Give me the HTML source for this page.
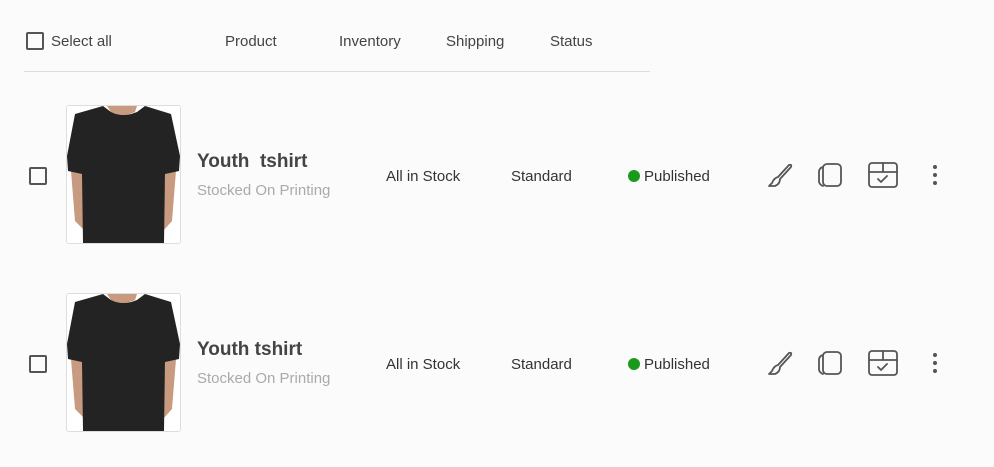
<!DOCTYPE html>
<html><head><style>
body{margin:0;width:994px;height:467px;background:#fbfbfb;font-family:"Liberation Sans",sans-serif;color:#333;position:relative;overflow:hidden}
.a{position:absolute;white-space:nowrap}
.cb{position:absolute;width:14px;height:14px;border:2px solid #555;border-radius:2px}
.h{font-size:15px;color:#444;top:33px}
.img{position:absolute;left:66px;width:113px;height:137px;border:1px solid #ddd;border-radius:3px;background:#fff;overflow:hidden}
.t{font-size:19px;font-weight:bold;color:#444;left:197px}
.s{font-size:15px;color:#aaa;left:197px}
.c{font-size:15px;color:#333}
.dot{display:inline-block;width:12px;height:12px;border-radius:50%;background:#1a9a1a;margin-right:4px;vertical-align:-1px}
</style></head><body>
<div class="cb" style="left:26px;top:32px"></div>
<div class="a h" style="left:51px">Select all</div>
<div class="a h" style="left:225px">Product</div>
<div class="a h" style="left:339px">Inventory</div>
<div class="a h" style="left:446px">Shipping</div>
<div class="a h" style="left:550px">Status</div>
<div class="a" style="left:24px;top:71px;width:626px;height:1px;background:#ddd"></div>

<div class="cb" style="left:29px;top:167px"></div>
<div class="img" style="top:105px"><svg width="113" height="137" viewBox="0 0 113 137"><rect width="113" height="137" fill="#fff"/><path d="M2 40 L8 115 L18 125 L14 40Z M111 40 L105 115 L96 125 L99 40Z" fill="#c89a80"/><path d="M40 0 L70 0 L68 6 Q56 12 44 6Z" fill="#c89a80"/><path d="M36 0 L44 6 Q56 12 70 6 L78 0 L104 8 L113 50 L112 65 L98 68 L97 137 L16 137 L15 68 L1 65 L0 50 L8 8Z" fill="#232323"/></svg></div>
<div class="a t" style="top:151px">Youth&nbsp; tshirt</div>
<div class="a s" style="top:182px">Stocked On Printing</div>
<div class="a c" style="left:386px;top:168px">All in Stock</div>
<div class="a c" style="left:511px;top:168px">Standard</div>
<div class="a c" style="left:628px;top:168px"><span class="dot"></span>Published</div>

<div class="cb" style="left:29px;top:355px"></div>
<div class="img" style="top:293px"><svg width="113" height="137" viewBox="0 0 113 137"><rect width="113" height="137" fill="#fff"/><path d="M2 40 L8 115 L18 125 L14 40Z M111 40 L105 115 L96 125 L99 40Z" fill="#c89a80"/><path d="M40 0 L70 0 L68 6 Q56 12 44 6Z" fill="#c89a80"/><path d="M36 0 L44 6 Q56 12 70 6 L78 0 L104 8 L113 50 L112 65 L98 68 L97 137 L16 137 L15 68 L1 65 L0 50 L8 8Z" fill="#232323"/></svg></div>
<div class="a t" style="top:339px">Youth tshirt</div>
<div class="a s" style="top:370px">Stocked On Printing</div>
<div class="a c" style="left:386px;top:356px">All in Stock</div>
<div class="a c" style="left:511px;top:356px">Standard</div>
<div class="a c" style="left:628px;top:356px"><span class="dot"></span>Published</div>

<svg class="a" style="left:0;top:0" width="994" height="467" fill="none" stroke="#555" stroke-width="1.8" stroke-linecap="round" stroke-linejoin="round">
<g id="ic">
<path d="M789 165 L778 177 M791 167 L780 179 M789 165 Q792 164 791 167 M778 177 Q774 178 772 183 L769 186 L775 186 Q780 184 780 179"/>
<rect x="823" y="164" width="18" height="22" rx="4"/><path d="M823 167 Q819 168 819 172 L819 182 Q820 185 823 186"/>
<rect x="869" y="163" width="28" height="24" rx="3"/><path d="M869 172 L897 172 M883 163 L883 172 M878 179 L881 182 L887 176"/>
</g>
<use href="#ic" y="188"/>
<g fill="#555" stroke="none"><circle cx="935" cy="167" r="2"/><circle cx="935" cy="175" r="2"/><circle cx="935" cy="183" r="2"/><circle cx="935" cy="355" r="2"/><circle cx="935" cy="363" r="2"/><circle cx="935" cy="371" r="2"/></g>
</svg>
</body></html>
